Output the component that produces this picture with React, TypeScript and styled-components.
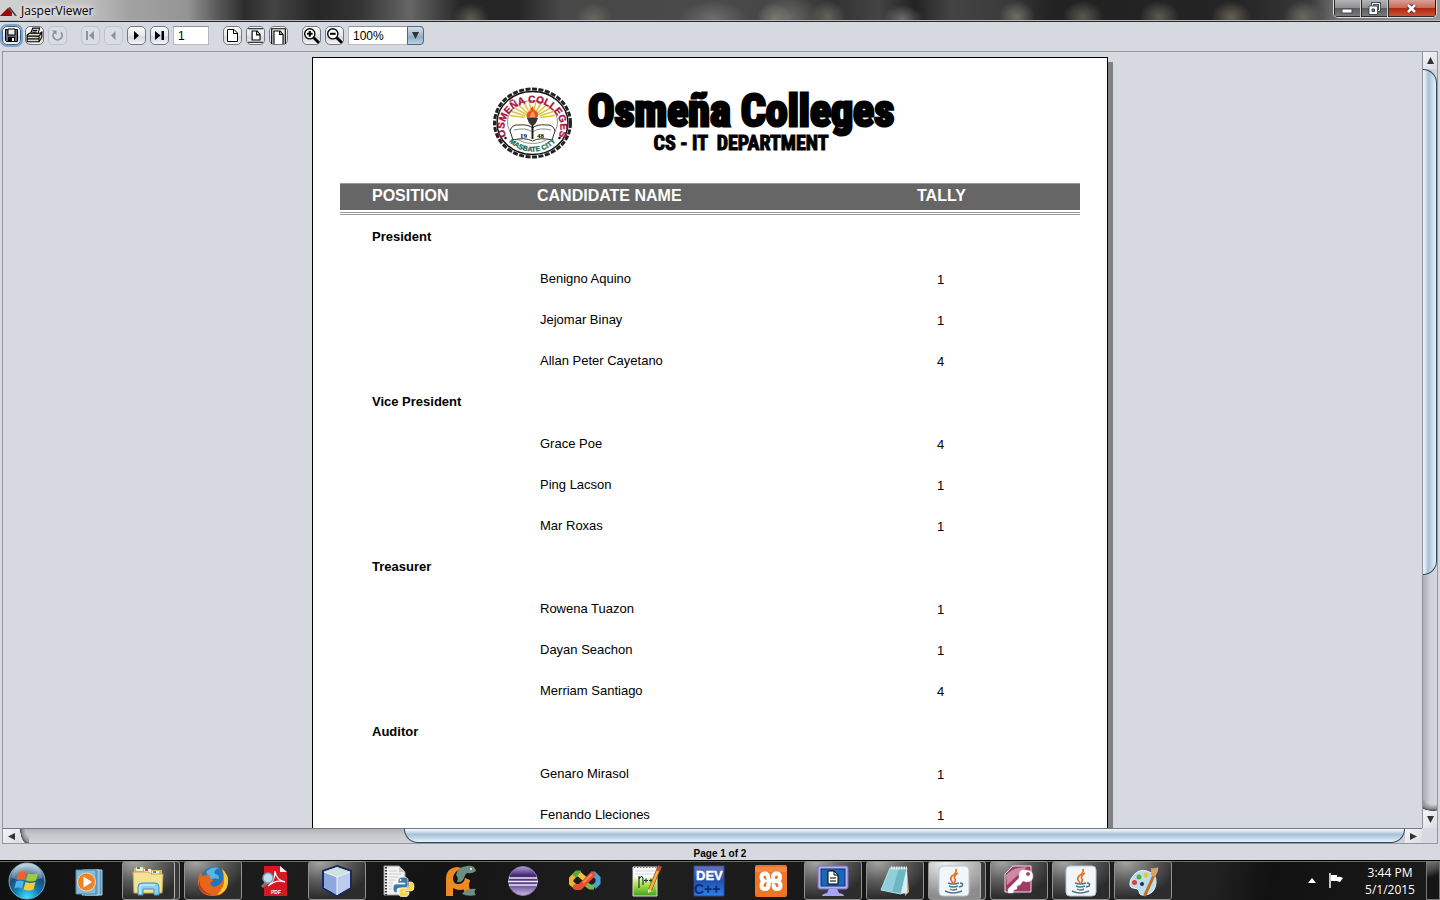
import React from "react";
import styled, { createGlobalStyle, css } from "styled-components";

const GlobalStyle = createGlobalStyle`
  * { box-sizing: border-box; }
  html, body, #root { height: 100%; }
  body {
    margin: 0;
    overflow: hidden;
    background: #d6d9e0;
    color: #000;
    font-family: "Liberation Sans", Arial, sans-serif;
  }
  button, input, select { font: inherit; color: inherit; margin: 0; padding: 0; }
  svg { display: block; }
`;

/* ---------- window frame ---------- */

const Desktop = styled.div`
  display: flex;
  flex-direction: column;
  height: 100vh;
`;

const TitleBar = styled.header`
  display: flex;
  align-items: flex-start;
  flex: none;
  height: 22px;
  border-bottom: 1px solid #26262c;
  box-shadow: inset 0 -1px #b9b9bd;
  background:
    radial-gradient(ellipse 18px 16px at 32.7% 90%, #77776baa, transparent),
    radial-gradient(ellipse 18px 16px at 41.2% 90%, #77776baa, transparent),
    radial-gradient(ellipse 18px 16px at 53.8% 90%, #8a8a7caa, transparent),
    radial-gradient(ellipse 20px 14px at 62.7% 90%, #8a8a8aaa, transparent),
    radial-gradient(ellipse 34px 18px at 49.5% 90%, #8c8c8c88, transparent),
    radial-gradient(ellipse 32px 22px at 54.8% 80%, #85858088, transparent),
    radial-gradient(ellipse 18px 16px at 57.5% 80%, #8d8d8088, transparent),
    radial-gradient(ellipse 18px 16px at 70.6% 80%, #8d8d80aa, transparent),
    radial-gradient(ellipse 20px 16px at 75.2% 80%, #77776baa, transparent),
    radial-gradient(ellipse 20px 16px at 80.5% 80%, #77776baa, transparent),
    radial-gradient(ellipse 20px 16px at 85.5% 80%, #85806caa, transparent),
    radial-gradient(ellipse 20px 16px at 90.5% 80%, #85857baa, transparent),
    linear-gradient(90deg, #d2d2d2 0, #c0c0c0 6%, #a2a2a2 9%, #949494 13%, #5c5c5c 15%, #2c2c2c 17%, #444 19%, #262626 22%, #343434 25%, #666 28.5%, #262626 32%, #262626 36%, #484848 39%, #4a4a4a 50%, #444 55%, #333 58%, #444 61%, #222 63.5%, #444 66%, #3a3a3a 70%, #222 73%, #242424 86%, #3a3a3a 91%, #777 93%, #999 100%);
`;

const WindowTitle = styled.h1`
  display: flex;
  align-items: center;
  gap: 4px;
  flex: 1;
  margin: 0;
  height: 21px;
  font: 400 12px/20px "Open Sans", "Noto Sans", sans-serif;
  text-shadow: 0 0 6px #fff, 0 0 8px #fff;
`;

const WindowButtons = styled.div`
  display: flex;
  height: 18px;
  margin-right: 3px;
  border: 1px solid #dadada;
  border-top: 0;
  border-radius: 0 0 5px 5px;
  overflow: hidden;
`;

const WindowButton = styled.button<{ $close?: boolean }>`
  display: grid;
  place-items: center;
  width: ${(p) => (p.$close ? 48 : 27)}px;
  height: 17px;
  border: 0;
  border-right: 1px solid ${(p) => (p.$close ? "#3b1410" : "#d0d0d0")};
  box-shadow: inset 1px -1px #2b2b2b;
  background: ${(p) =>
    p.$close
      ? "linear-gradient(#d9a197, #c96a58 45%, #b02a10 50%, #d0573a)"
      : "linear-gradient(#b5b5b5, #8f8f8f 45%, #5d5d5d 50%, #7e7e7e)"};
`;

/* ---------- toolbar ---------- */

const Toolbar = styled.div`
  display: flex;
  align-items: center;
  gap: 14px;
  flex: none;
  height: 29px;
  padding: 0 2px 2px;
`;

const ToolGroup = styled.div`
  display: flex;
  gap: 4px;
`;

const ToolButton = styled.button<{ $focused?: boolean }>`
  display: grid;
  place-items: center;
  width: 19px;
  height: 19px;
  border: 1px solid #6f7886;
  border-radius: 5px;
  background: linear-gradient(#fbfbfc, #e6e8ec 50%, #d3d7de 60%, #f4f5f7);
  ${(p) =>
    p.$focused &&
    css`
      border-color: #41607f;
      box-shadow: 0 0 0 2px #7ea4cc;
    `}
  &:disabled {
    border-color: #bfc3cb;
    background: #dadde3;
    color: #8e9299;
  }
`;

const PageInput = styled.input`
  width: 36px;
  height: 19px;
  padding: 1px 4px 0;
  border: 1px solid #b4b8bf;
  border-top-color: #8d9199;
  background: #fff;
  font-size: 12px;
`;

const ZoomPicker = styled.div`
  display: flex;
  position: relative;
  width: 76px;
  height: 19px;
`;

const ZoomSelect = styled.select`
  appearance: none;
  width: 100%;
  height: 19px;
  padding: 0 4px;
  border: 1px solid #b4b8bf;
  border-top-color: #8d9199;
  border-radius: 0 4px 4px 0;
  background: #fff;
  font-size: 12px;
`;

const ZoomArrow = styled.span`
  position: absolute;
  top: 0;
  right: 0;
  display: grid;
  place-items: center;
  width: 17px;
  height: 19px;
  border: 1px solid #53687f;
  border-radius: 0 4px 4px 0;
  background: linear-gradient(#d5e0ea, #9db8cf 50%, #8fadc6 60%, #bdd3e3);
  pointer-events: none;
`;

/* ---------- viewer ---------- */

const ScrollPane = styled.main`
  display: grid;
  grid-template: minmax(0, 1fr) 15px / minmax(0, 1fr) 15px;
  flex: 1;
  min-height: 0;
  margin: 0 2px;
  border: 1px solid #9297a1;
`;

const Viewport = styled.div`
  display: flex;
  justify-content: center;
  overflow: hidden;
  padding: 5px 5px 0 0;
`;

const Paper = styled.article`
  flex: none;
  align-self: flex-start;
  width: 796px;
  height: 1124px;
  padding: 29px 27px;
  border: 1px solid #000;
  background: #fff;
  box-shadow: 5px 5px #808080;
`;

const Letterhead = styled.div`
  display: flex;
  gap: 15px;
  height: 96px;
  padding-left: 152px;
`;

const HeadText = styled.div`
  display: flex;
  flex-direction: column;
  align-items: center;
  font-family: "Liberation Sans Narrow", "Roboto Condensed", Roboto, sans-serif;
  font-weight: 700;
  white-space: pre;
`;

const College = styled.h2`
  margin: 0;
  font-size: 44px;
  line-height: 48px;
  -webkit-text-stroke: 3px #000;
`;

const Department = styled.p`
  margin: 0;
  font-size: 20px;
  line-height: 16px;
  -webkit-text-stroke: 1px #000;
`;

const Report = styled.table`
  width: 100%;
  table-layout: fixed;
  border-collapse: collapse;
  font-size: 13px;
  line-height: 16px;
  text-align: left;

  td, th { padding: 0; vertical-align: top; }
`;

const HeadRow = styled.tr`
  height: 32px;
  background: linear-gradient(#999 0 1px, #666 1px 27px, #fff 27px 29px, #999 29px 30px, #fff 30px 31px, #999 31px 32px);
  color: #fff;
  font-size: 16px;

  && th { padding-top: 5px; }
  th:first-child { padding-left: 32px; }
`;

const PositionRow = styled.tr`
  height: 42px;
  && th { padding: 14px 0 0 32px; }
`;

const CandidateRow = styled.tr`
  height: 41px;
  && td { padding: 14px 0 0 3px; }
  && td:last-child { padding: 15px 0 0 20px; }
`;

/* ---------- scroll bars ---------- */

const ScrollBar = styled.div<{ $vertical?: boolean }>`
  display: flex;
  flex-direction: ${(p) => (p.$vertical ? "column" : "row")};
  min-width: 0;
  min-height: 0;
  ${(p) =>
    p.$vertical
      ? "border-left: 1px solid #8f939b; background: linear-gradient(90deg, #a9acb2, #cfd1d6 50%, #d6d7dc);"
      : "border-top: 1px solid #74787f; background: linear-gradient(#b1b4ba, #c9cbd0 50%, #d2d4d9);"}
`;

const ScrollArrow = styled.button`
  display: grid;
  place-items: center;
  flex: none;
  width: 14px;
  height: 17px;
  border: 0;
  background: linear-gradient(135deg, #f4f5f7, #d9dce2);
`;

const HorizontalArrow = styled(ScrollArrow)`
  width: 17px;
  height: 14px;
`;

const Gap = styled.div<{ $share: number }>`
  flex: ${(p) => p.$share} 1 0;
`;

const TrackEnd = styled.div<{ $vertical?: boolean }>`
  flex: none;
  width: ${(p) => (p.$vertical ? "100%" : "9px")};
  height: ${(p) => (p.$vertical ? "11px" : "100%")};
  background: ${(p) =>
    p.$vertical
      ? "radial-gradient(ellipse 17px 11px at 70% 0, transparent 40%, #85888e 80%, #505257 96%, #e4e6ea 100%)"
      : "radial-gradient(ellipse 9px 16px at 100% 0, transparent 40%, #85888e 80%, #505257 96%, #e4e6ea 100%)"};
`;

const Thumb = styled.div<{ $share: number; $vertical?: boolean }>`
  flex: ${(p) => p.$share} 1 0;
  border: 1px solid #33475c;
  ${(p) =>
    p.$vertical
      ? "border-left: 0; border-radius: 0 14px 14px 0; background: linear-gradient(90deg, #f4f8fb, #d5e2ed 20%, #a7c0d6 40%, #b9d0e2 60%, #e3f4fc);"
      : "border-top: 0; border-radius: 0 0 14px 14px; background: linear-gradient(#f4f8fb, #d5e2ed 20%, #a7c0d6 40%, #b9d0e2 60%, #e3f4fc);"}
`;

const StatusBar = styled.footer`
  flex: none;
  height: 16px;
  padding-top: 2px;
  font-size: 10px;
  line-height: 16px;
  font-weight: 700;
  text-align: center;
`;

/* ---------- taskbar ---------- */

const Taskbar = styled.nav`
  display: flex;
  flex: none;
  height: 40px;
  border-top: 1px solid #000;
  box-shadow: inset 0 1px #6c6c6c;
  background: linear-gradient(100deg, #101010, #1d1d1d 20%, #141414 30%, #202020 45%, #151515 60%, #222 84%, #111 88%, #1b1b1b);
`;

const StartButton = styled.button`
  display: grid;
  place-items: center;
  width: 60px;
  padding-right: 6px;
  border: 0;
  background: none;
`;

const Tasks = styled.div`
  display: flex;
  gap: 4px;
  flex: 1;
`;

const Task = styled.button<{ $state?: "open" | "active"; $stacked?: boolean }>`
  display: grid;
  place-items: center;
  width: 58px;
  height: 39px;
  padding: 0 ${(p) => (p.$stacked ? 6 : 0)}px 0 0;
  border: 1px solid transparent;
  border-radius: 3px;
  background: none;
  ${(p) =>
    p.$state &&
    css`
      border-color: #929292;
      background: ${p.$state === "active"
        ? "radial-gradient(ellipse 50px 34px at 30% 0, #f0f0f0, #b4b4b4 60%, #8d8d8d)"
        : "radial-gradient(ellipse 52px 36px at 20% 0, #a5a5a5, #5f5f5f 50%, #2c2c2c)"};
    `}
  ${(p) =>
    p.$stacked &&
    css`
      box-shadow: inset -4px 0 #3a3a3a, inset -5px 0 #b5b5b5;
    `}
`;

const Tray = styled.div`
  display: flex;
  align-items: center;
  gap: 13px;
  color: #fff;
`;

const TrayButton = styled.button`
  padding: 0;
  border: 0;
  background: none;
`;

const Clock = styled.time`
  width: 60px;
  margin-left: 3px;
  font: 400 12px/17px "Open Sans", "Noto Sans", sans-serif;
  text-align: center;
`;

const ShowDesktop = styled.button`
  width: 14px;
  height: 39px;
  margin-left: -7px;
  border: 1px solid #777;
  background: linear-gradient(160deg, #777, #444 25%, #151515 40%);
`;

/* ---------- drawings ---------- */

const JasperMark = () => (
  <svg width="17" height="12" viewBox="0 0 17 12">
    <path d="M0 11 L8 3 L12 7 V11Z" fill="#b30d0d" />
    <path d="M0 11 L8 3 L11 11Z" fill="#7c0505" opacity=".5" />
    <path d="M8 3 L10 2 L17 11 H15 L11 6Z" fill="#444" />
  </svg>
);

const SealMark = () => (
  <svg width="81" height="72" viewBox="0 0 81 72" role="img" aria-label="Osmeña Colleges seal">
    <defs>
      <path id="arcTop" d="M15 51 A28 25 0 1 1 66 51" />
      <path id="arcBottom" d="M12 47 A31 29 0 0 0 69 47" />
    </defs>
    <ellipse cx="40.5" cy="36" rx="38" ry="34" fill="#fff" stroke="#222" strokeWidth="3" strokeDasharray="5 1.500" />
    <ellipse cx="40.5" cy="36" rx="35.5" ry="31.5" fill="#fff" stroke="#111" strokeWidth="1.5" />
    <ellipse cx="40.5" cy="35" rx="25" ry="21.5" fill="#fffef2" stroke="#777" strokeWidth=".8" />
    <g stroke="#ddc64a" strokeWidth="1.5">
      {[-168, -154, -140, -126, -112, -98, -82, -68, -54, -40, -26, -12].map((a) => {
        const r = (a * Math.PI) / 180;
        return (
          <line key={a} x1={40.5 + 8 * Math.cos(r)} y1={32 + 7 * Math.sin(r)} x2={40.5 + 23 * Math.cos(r)} y2={32 + 17 * Math.sin(r)} />
        );
      })}
    </g>
    <path d="M18 44 Q20 37 27 38 Q36 37 40.5 41 Q45 37 54 38 Q61 37 63 44 L60 53 Q48 50 40.5 54 Q33 50 21 53Z" fill="#fff" stroke="#333" />
    <path d="M22 43 Q34 40 40.5 45 Q47 40 59 43" fill="none" stroke="#888" />
    <path d="M40.5 37 V52" stroke="#222" strokeWidth="2" />
    <path d="M35 31 H46 L44 36 L42 38 H39 L37 36Z" fill="#333" />
    <path d="M35 31 Q33 26 38 24 Q38 21 41 19 Q41 23 44 24 Q48 27 45 31Z" fill="#e8502a" />
    <path d="M38 30 Q38 27 41 24 Q43 27 43 30Z" fill="#f7a44b" />
    <text x="28" y="51" fontFamily="Liberation Serif, serif" fontSize="7" fontWeight="700">19</text>
    <text x="45" y="51" fontFamily="Liberation Serif, serif" fontSize="7" fontWeight="700">48</text>
    <text fontFamily="Liberation Sans, sans-serif" fontSize="10" fontWeight="700" fill="#a8123f" stroke="#a8123f" strokeWidth=".3">
      <textPath href="#arcTop" startOffset="50%" textAnchor="middle">OSMEÑA COLLEGES</textPath>
    </text>
    <text fontFamily="Liberation Sans, sans-serif" fontSize="7" fontWeight="700" fill="#126647" stroke="#126647" strokeWidth=".2">
      <textPath href="#arcBottom" startOffset="50%" textAnchor="middle">MASBATE CITY</textPath>
    </text>
    <circle cx="13.5" cy="51" r="1.2" />
    <circle cx="67.5" cy="51" r="1.2" />
  </svg>
);

const Glyph = ({ children, size = 15 }: { children: React.ReactNode; size?: number }) => (
  <svg width={size} height={size} viewBox="0 0 15 15" fill="none" stroke="currentColor">
    {children}
  </svg>
);

const Arrow = ({ turn = 0 }: { turn?: number }) => (
  <svg width="9" height="9" viewBox="0 0 9 9">
    <path d="M4.5 1 L8 8 H1Z" fill="#333" transform={`rotate(${turn} 4.5 4.5)`} />
  </svg>
);

const Icon = ({ children }: { children: React.ReactNode }) => (
  <svg width="32" height="32" viewBox="0 0 32 32">
    {children}
  </svg>
);

const StartOrb = () => (
  <svg width="38" height="38" viewBox="0 0 38 38">
    <defs>
      <radialGradient id="orb" cx=".5" cy=".95" r=".9">
        <stop offset="0" stopColor="#3fe0ff" />
        <stop offset=".4" stopColor="#1277b4" />
        <stop offset=".7" stopColor="#1f4e74" />
        <stop offset="1" stopColor="#a9c4d4" />
      </radialGradient>
    </defs>
    <circle cx="19" cy="19" r="18" fill="url(#orb)" stroke="#7ba6bf" />
    <path d="M4 16 A15 15 0 0 1 34 16 Q19 21 4 16Z" fill="#fff" opacity=".25" />
    <path d="M10.5 11 Q14 8.5 18.5 10.5 L16.5 18 Q12.5 16 8.5 18Z" fill="#f0622a" />
    <path d="M20 11.2 Q24.5 13.5 30 11.2 L28 18.5 Q23 20.5 18 18.5Z" fill="#9ccb3b" />
    <path d="M8 19.5 Q12 17.5 16 19.5 L14 26.5 Q10 24.5 6.5 26.5Z" fill="#4db4ec" />
    <path d="M17.5 20 Q22.5 22 27.5 20 L25.5 27.5 Q21 29.5 15.5 27.5Z" fill="#fccb3a" />
  </svg>
);

const MediaIcon = () => (
  <Icon>
    <path d="M12 5 H29 V30 H12Z" fill="#5a9ac4" stroke="#a9d4ee" />
    <path d="M9 5 H26 V30 H9Z" fill="#6eabd0" stroke="#b7dcf2" />
    <path d="M3 5 H23 V29 H3Z" fill="#86bbdc" stroke="#4f86ac" />
    <circle cx="13.5" cy="17" r="9" fill="#f08125" stroke="#fbd0a4" />
    <path d="M10.5 11.5 L19 17 L10.5 22.5Z" fill="#fff" />
  </Icon>
);

const ExplorerIcon = () => (
  <Icon>
    <path d="M2 3 H12 L14 5 H30 V28 H2Z" fill="#d9b75e" />
    <path d="M4 2 H11 V6 H4Z" fill="#f4f4f4" stroke="#bb9" strokeWidth=".5" />
    <path d="M5 2 H8 V4 H5Z" fill="#29a329" />
    <path d="M12 4 H19 V8 H12Z" fill="#f9f9f9" />
    <path d="M13 4 H16 V6 H13Z" fill="#d6492a" />
    <path d="M20 6 H27 V10 H20Z" fill="#f9f9f9" />
    <path d="M21 6 H24 V8 H21Z" fill="#3a91d8" />
    <path d="M1 7 H17 L19 9 H31 L30 28 H2Z" fill="#f5e295" stroke="#c9a650" />
    <path d="M6 30 V22 Q6 18 10 18 H23 Q27 18 27 22 V30 H22 V24 H11 V30Z" fill="#8ed0ec" stroke="#3f93bd" />
    <path d="M8 29 V22 Q8 20 10 20 H23" stroke="#dff6ff" fill="none" />
  </Icon>
);

const FirefoxIcon = () => (
  <Icon>
    <circle cx="17" cy="15" r="13" fill="#1f76b9" />
    <path d="M9 7 Q14 1 22 3 Q16 5 18 9 Q22 9 22 14 Q17 12 14 15Z" fill="#58b5e8" />
    <path d="M5 6 Q4 10 6 11 Q9 9 13 10 Q11 13 14 14 Q17 14 16 16 Q13 17 13 19 Q16 23 20 21 Q25 19 26 14 Q27 9 25 4 Q32 10 31 18 Q29 31 16 31 Q2 31 1 17 Q1 10 5 6Z" fill="#e8661c" />
    <path d="M25 4 Q32 10 31 18 Q29 28 20 30 Q28 22 27 14 Q27 8 25 4Z" fill="#fbc92f" />
    <path d="M2 14 Q3 27 16 30 Q6 30 2 22Z" fill="#b9361b" />
  </Icon>
);

const PdfIcon = () => (
  <Icon>
    <path d="M5 1 H21 L28 7 V31 H5Z" fill="#d31a22" />
    <path d="M21 1 V7 H28Z" fill="#f4f4f4" />
    <path d="M9 21 Q16 16 16 6 Q17 15 26 17 Q17 14 9 21Z" fill="none" stroke="#fff" strokeWidth="1.3" />
    <path d="M8 17 L3 22" stroke="#777" strokeWidth="3" />
    <circle cx="9" cy="13" r="5" fill="#bfe0f4" stroke="#8a9cab" strokeWidth="1.5" />
    <text x="12" y="29" fontSize="5" fontWeight="700" fill="#fff" fontFamily="Liberation Sans, sans-serif">PDF</text>
  </Icon>
);

const CubeIcon = () => (
  <Icon>
    <path d="M16 1 L30 6 V23 L16 31 L2 23 V6Z" fill="#cfdcf0" stroke="#1b2762" strokeWidth="2" />
    <path d="M3 7 L16 12 V30 L3 22Z" fill="#8ea7dd" />
    <path d="M16 12 L29 7 V22 L16 30Z" fill="#bccbee" />
    <path d="M3 6.5 L16 2 L29 6.5 L16 12Z" fill="#cfe3dc" />
    <path d="M16 12 V30 M3 7 L16 12 L29 7" stroke="#eef4fd" fill="none" />
  </Icon>
);

const Snake = () => (
  <>
    <path d="M20 12 Q15 12 15 16 V18 H22 V19 H13 Q10 19 10 24 Q10 28 14 28 V25 Q14 23 17 23 H22 Q25 23 25 20 V15 Q25 12 20 12Z" fill="#3c78a9" stroke="#fff" strokeWidth=".7" />
    <path d="M26 17 H28 Q31 17 31 22 Q31 26 28 26 H21 V27 H26 V29 Q25 32 21 32 Q16 32 16 29 V26 Q16 23 19 23 H24 Q26 23 26 20Z" fill="#fad749" stroke="#fff" strokeWidth=".7" />
    <circle cx="17.5" cy="15" r="1" fill="#fff" />
  </>
);

const PythonIcon = () => (
  <Icon>
    <path d="M1 1 H16 L22 7 V30 H1Z" fill="#f2f2f2" stroke="#999" />
    <path d="M3 2 V30" stroke="#333" strokeWidth="2" strokeDasharray="1.500 1.500" />
    <path d="M16 1 V7 H22Z" fill="#c7c7c7" />
    <path d="M6 6 H14 M6 9 H18 M6 12 H15 M6 15 H12 M6 18 H10 M6 21 H9 M6 24 H9" stroke="#ccc" />
    <Snake />
  </Icon>
);

const CharmIcon = () => (
  <Icon>
    <path d="M1 31 V14 Q1 3 12 2 L17 3 Q9 6 8 13 Q8 19 13 19 Q19 19 20 13 L25 15 Q23 25 15 25 Q11 25 8 23 V31Z" fill="#ee8a23" />
    <path d="M11 10 Q12 2 22 1 Q30 0 31 6 Q27 9 22 8 Q20 9 19 13 Q17 18 12 17 Q14 13 11 10Z" fill="#6d8f81" />
    <circle cx="26" cy="4" r="1" fill="#fff" />
    <path d="M19 17 L25 15 Q22 24 27 26 L21 28 Q17 26 19 17Z" fill="#ee8a23" />
    <path d="M17 29 Q21 23 31 24 Q28 27 31 30 Q23 32 17 29Z" fill="#6d8f81" />
  </Icon>
);

const EclipseIcon = () => (
  <Icon>
    <defs>
      <linearGradient id="ecl" x2="0" y2="1">
        <stop offset="0" stopColor="#b9a4d6" />
        <stop offset=".3" stopColor="#432a72" />
        <stop offset=".6" stopColor="#5b4389" />
        <stop offset="1" stopColor="#cdbce6" />
      </linearGradient>
    </defs>
    <circle cx="16" cy="16" r="14.5" fill="url(#ecl)" stroke="#8774ab" />
    <path d="M2 13 H30 M1 16.5 H31 M2 20 H30" stroke="#eee6fa" strokeWidth="1.5" />
  </Icon>
);

const RibbonIcon = () => (
  <Icon>
    <path d="M10 9 H7 L2 14 V18 L7 22" fill="none" stroke="#e9b730" strokeWidth="5" />
    <path d="M5 11 L8 8 H12" fill="none" stroke="#5aa646" strokeWidth="5" />
    <path d="M22 9 H25 L29 13 V18 L25 22" fill="none" stroke="#4d9fd3" strokeWidth="5" />
    <path d="M25 22 H21 L17 19" fill="none" stroke="#71b94e" strokeWidth="5" />
    <path d="M10 9 L17 15" stroke="#f0c443" strokeWidth="5" />
    <path d="M7 22 H11 L23 10" fill="none" stroke="#e84f2c" strokeWidth="6" strokeLinecap="round" strokeLinejoin="round" />
    <path d="M14 18 L23 9" stroke="#f58a58" strokeWidth="2" />
  </Icon>
);

const NotepadPlusIcon = () => (
  <Icon>
    <defs>
      <linearGradient id="npp" x2="0" y2="1">
        <stop offset=".3" stopColor="#fff" />
        <stop offset=".6" stopColor="#b2e34c" />
        <stop offset="1" stopColor="#3fa31d" />
      </linearGradient>
    </defs>
    <path d="M2 2 H26 V31 H2Z" fill="url(#npp)" stroke="#ddd" />
    <path d="M3 2 H26" stroke="#888" strokeWidth="2" strokeDasharray="1.500 1.500" />
    <path d="M4 6 H24 M4 9 H24" stroke="#c9d4dc" />
    <path d="M8 23 V11 M8 14 Q11 9 12 14 V20 M13 15.5 H17 M15 13.5 V17.5 M18 15.5 H22 M20 13.5 V17.5" fill="none" stroke="#234" strokeWidth="1.2" />
    <path d="M28 3 L19 25" stroke="#8c5a1f" strokeWidth="4" />
    <path d="M28 3 L19 25" stroke="#f3b63c" strokeWidth="2.5" />
    <path d="M29 1 L27 6" stroke="#c4473a" strokeWidth="4" />
    <path d="M17 24 L21 26 L17 28Z" fill="#f2dfb4" />
  </Icon>
);

const DevIcon = () => (
  <Icon>
    <defs>
      <linearGradient id="dev" x2="0" y2="1">
        <stop offset="0" stopColor="#6d72b4" />
        <stop offset=".5" stopColor="#2251b0" />
        <stop offset="1" stopColor="#2d7ff0" />
      </linearGradient>
    </defs>
    <path d="M1 1 H31 V31 H1Z" fill="url(#dev)" stroke="#274b9c" />
    <text x="3" y="15" fontSize="13" fontWeight="700" fill="#fff" stroke="#fff" strokeWidth=".4" fontFamily="Liberation Sans, sans-serif">DEV</text>
    <text x="1" y="29" fontSize="14" fontWeight="700" fill="#0f2d6e" fontFamily="Liberation Sans Narrow, sans-serif">C++</text>
  </Icon>
);

const XamppIcon = () => (
  <Icon>
    <rect x="0" y="0" width="32" height="32" rx="2" fill="#ee7426" />
    <path d="M0 2 H32 V7 H0Z" fill="#fff" opacity=".15" />
    <g fill="none" stroke="#fff" strokeWidth="4" strokeLinecap="round">
      <path d="M13 12 Q13 8.5 10 8.5 Q6.5 8.5 6.5 12 Q6.5 15 9 16 Q6.5 17.500 6.5 20.5 Q6.5 24 10 24 Q13.5 24 13.5 20 V19" />
      <path d="M18 12 Q18 8.5 21.5 8.5 Q25 8.5 25 12 Q25 15 22.5 16 Q25.500 17.500 25.5 20.5 Q25.5 24 22 24 Q18.5 24 18.500 20" />
      <path d="M13 12 L14 16 H22 M14 16 L13.5 20 M14 16 H18 L18 12" />
    </g>
  </Icon>
);

const MonitorIcon = () => (
  <Icon>
    <rect x="1" y="1" width="30" height="23" rx="2" fill="#b4b0f2" stroke="#706cc9" />
    <rect x="4" y="4" width="24" height="17" fill="#1867b9" stroke="#12336b" />
    <path d="M12 24 H20 L22 28 Q27 29 27 31 H5 Q5 29 10 28Z" fill="#a9a2f5" />
    <path d="M11 6 H17 L21 10 V19 H11Z" fill="#fff" stroke="#000" />
    <path d="M17 6 V10 H21 M13 13 H19 M13 16 H19" stroke="#000" fill="none" />
  </Icon>
);

const NoteIcon = () => (
  <Icon>
    <path d="M28 4 L30 27 L26 31 L24 8Z" fill="#c9b478" />
    <path d="M11 3 H28 L22 29 L2 25Z" fill="#6db7c5" stroke="#b7e3ea" />
    <path d="M11 3 H20 L13 27 L2 25Z" fill="#a9dde5" opacity=".6" />
    <path d="M28 4 L28 28 L22 29Z" fill="#d9eef1" />
    <path d="M12 3 H28" stroke="#eee" strokeWidth="3" strokeDasharray="1.500 1" />
  </Icon>
);

const JavaIcon = () => (
  <Icon>
    <rect x="1" y="1" width="30" height="30" rx="4" fill="#f3f6f9" stroke="#b6c6d5" />
    <path d="M18 4 Q19 8 14 11 Q11 14 15 18 M20 8 Q15 11 17 14 Q18 16 16 18" fill="none" stroke="#e67625" strokeWidth="1.8" />
    <path d="M10 18 Q15 20 21 18 M11 21 Q15 23 20 21 M12 24 Q15 26 19 24 M22 18 Q26 18 24 21 L21 22 M7 26 Q15 30 24 26" fill="none" stroke="#4b7690" strokeWidth="1.5" />
  </Icon>
);

const AccessIcon = () => (
  <Icon>
    <path d="M10 1 H28 V27 H2 V9Z" fill="#a13a62" stroke="#f2dce4" />
    <path d="M3 10 Q10 2 24 2 L4 20Z" fill="#cb8aa2" />
    <path fillRule="evenodd" d="M16 9 Q17 4 23 5 Q30 5 30 11 Q30 17 23 17 L20 16 L17 20 L14 21 V24 L11 25 L10 28 L5 28 V24 L16 13Z M25 7 A2 2 0 1 0 25.1 7Z" fill="#fff" stroke="#d9c4cc" strokeWidth=".5" />
  </Icon>
);

const PaintIcon = () => (
  <Icon>
    <path d="M4 14 Q10 3 20 6 Q30 9 29 18 Q28 29 18 30 Q12 31 12 26 Q11 23 6 23 Q1 22 4 14Z" fill="#b9dcee" stroke="#e8f6fc" />
    <circle cx="7.5" cy="17.5" r="2.5" fill="#dd3f32" />
    <circle cx="12" cy="12" r="2.5" fill="#55ab41" />
    <circle cx="19" cy="10" r="2.5" fill="#f2c52e" />
    <circle cx="15" cy="19" r="2" fill="#25353f" />
    <path d="M28 8 L18 30" stroke="#c66d1f" strokeWidth="3" strokeLinecap="round" />
    <path d="M24 3 Q28 4 31 2 L31 6 L28 12 L24 10Z" fill="#d4a46a" />
  </Icon>
);

/* ---------- data ---------- */

const positions = [
  { title: "President", candidates: [["Benigno Aquino", 1], ["Jejomar Binay", 1], ["Allan Peter Cayetano", 4]] },
  { title: "Vice President", candidates: [["Grace Poe", 4], ["Ping Lacson", 1], ["Mar Roxas", 1]] },
  { title: "Treasurer", candidates: [["Rowena Tuazon", 1], ["Dayan Seachon", 1], ["Merriam Santiago", 4]] },
  { title: "Auditor", candidates: [["Genaro Mirasol", 1], ["Fenando Lleciones", 1]] },
] as const;

type TaskInfo = { name: string; icon: () => React.JSX.Element; state?: "open" | "active"; stacked?: boolean };

const tasks: TaskInfo[] = [
  { name: "Media Player", icon: MediaIcon },
  { name: "Explorer", icon: ExplorerIcon, state: "open", stacked: true },
  { name: "Firefox", icon: FirefoxIcon, state: "open" },
  { name: "PDF Reader", icon: PdfIcon },
  { name: "NetBeans", icon: CubeIcon, state: "open" },
  { name: "Python", icon: PythonIcon },
  { name: "PyCharm", icon: CharmIcon },
  { name: "Eclipse", icon: EclipseIcon },
  { name: "Code Studio", icon: RibbonIcon },
  { name: "Notepad++", icon: NotepadPlusIcon },
  { name: "Dev-C++", icon: DevIcon },
  { name: "XAMPP", icon: XamppIcon },
  { name: "Screen Tool", icon: MonitorIcon, state: "open" },
  { name: "Notepad", icon: NoteIcon, state: "open" },
  { name: "Java", icon: JavaIcon, state: "active", stacked: true },
  { name: "Access", icon: AccessIcon, state: "open" },
  { name: "Java Application", icon: JavaIcon, state: "open" },
  { name: "Paint", icon: PaintIcon, state: "open" },
];

/* ---------- page ---------- */

const ViewerToolbar = () => (
  <Toolbar>
    <ToolGroup>
      <ToolButton $focused aria-label="Save">
        <Glyph>
          <path d="M1.5 1.5 H13.5 V13.5 H2.5 L1.5 12.5Z" fill="#667" stroke="#000" />
          <path d="M4 1 H11 V7 H4Z" fill="#e8eaf0" stroke="#000" />
          <path d="M4 9 H11 V14 H4Z" fill="#000" stroke="none" />
          <path d="M8 10 H10 V13 H8Z" fill="#fff" stroke="none" />
        </Glyph>
      </ToolButton>
      <ToolButton aria-label="Print">
        <Glyph size={17}>
          <path d="M4 6 L6 1 H12 L10.5 6Z" fill="#fff" />
          <path d="M6 3 H10 M5.5 4.5 H9.5" />
          <path d="M1 7 L3 5.5 H12.5 L14 4.5 V9 L11.5 13 H1Z" fill="#dcdcd0" />
          <path d="M1 8 H11.5 V13 M1 10.5 H11.5 M11.5 8 L14 5" />
          <path d="M8 9.5 H10" stroke="#c8b400" />
        </Glyph>
      </ToolButton>
      <ToolButton disabled aria-label="Reload">
        <Glyph>
          <path d="M4.2 4.5 A4.5 4.5 0 1 0 11 4.5" strokeWidth="1.8" />
          <path d="M2 2.5 H6.5 V7Z" fill="currentColor" stroke="none" />
        </Glyph>
      </ToolButton>
    </ToolGroup>
    <ToolGroup>
      <ToolButton disabled aria-label="First page">
        <Glyph>
          <path d="M3 3 H5 V12 H3Z M11 3 V12 L6 7.5Z" fill="currentColor" stroke="none" />
        </Glyph>
      </ToolButton>
      <ToolButton disabled aria-label="Previous page">
        <Glyph>
          <path d="M9.5 3 V12 L5 7.5Z" fill="currentColor" stroke="none" />
        </Glyph>
      </ToolButton>
      <ToolButton aria-label="Next page">
        <Glyph>
          <path d="M5 3 V12 L10 7.5Z" fill="currentColor" stroke="none" />
        </Glyph>
      </ToolButton>
      <ToolButton aria-label="Last page">
        <Glyph>
          <path d="M3 3 V12 L8.5 7.5Z M9.5 3 H12 V12 H9.5Z" fill="currentColor" stroke="none" />
        </Glyph>
      </ToolButton>
      <PageInput aria-label="Page number" defaultValue="1" />
    </ToolGroup>
    <ToolGroup>
      <ToolButton aria-label="Actual size">
        <Glyph>
          <path d="M2.5 1.5 H9 L12.5 5 V13.5 H2.5Z" fill="#fff" />
          <path d="M8.5 1.5 V5.5 H12.5" />
        </Glyph>
      </ToolButton>
      <ToolButton aria-label="Fit page">
        <Glyph size={17}>
          <path d="M1 1.5 H14 M1 13.5 H14" />
          <path d="M4.5 3.5 H9 L11.5 6.5 V11.5 H4.5Z" fill="#fff" />
          <path d="M8.5 3.5 V7 H11.5" />
        </Glyph>
      </ToolButton>
      <ToolButton aria-label="Fit width">
        <Glyph size={17}>
          <path d="M1.5 1 V15 M13.5 1 V15 M1 1.5 H14" />
          <path d="M3.5 15 V3.5 H9 L11.5 6.5 V15" fill="#fff" />
          <path d="M8.5 3.5 V6.5 H11.5" />
        </Glyph>
      </ToolButton>
    </ToolGroup>
    <ToolGroup>
      <ToolButton aria-label="Zoom in">
        <Glyph size={17}>
          <circle cx="6" cy="6" r="4.5" fill="#fff" strokeWidth="1.2" />
          <path d="M3.5 6 H8.5 M6 3.5 V8.5" strokeWidth="1.8" />
          <path d="M9.5 9.5 L14 14" strokeWidth="2.5" />
        </Glyph>
      </ToolButton>
      <ToolButton aria-label="Zoom out">
        <Glyph size={17}>
          <circle cx="6" cy="6" r="4.5" fill="#fff" strokeWidth="1.2" />
          <path d="M3.5 6 H8.5" strokeWidth="1.8" />
          <path d="M9.5 9.5 L14 14" strokeWidth="2.5" />
        </Glyph>
      </ToolButton>
      <ZoomPicker>
        <ZoomSelect aria-label="Zoom ratio" defaultValue="100%">
          <option>50%</option>
          <option>100%</option>
          <option>200%</option>
        </ZoomSelect>
        <ZoomArrow>
          <Arrow turn={180} />
        </ZoomArrow>
      </ZoomPicker>
    </ToolGroup>
  </Toolbar>
);

const TallyReport = () => (
  <Paper>
    <Letterhead>
      <SealMark />
      <HeadText>
        <College>Osmeña Colleges</College>
        <Department>{"CS - IT  DEPARTMENT"}</Department>
      </HeadText>
    </Letterhead>
    <Report>
      <colgroup>
        <col width="197" />
        <col width="380" />
        <col />
      </colgroup>
      <thead>
        <HeadRow>
          <th>POSITION</th>
          <th>CANDIDATE NAME</th>
          <th>TALLY</th>
        </HeadRow>
      </thead>
      {positions.map((position) => (
        <tbody key={position.title}>
          <PositionRow>
            <th colSpan={3}>{position.title}</th>
          </PositionRow>
          {position.candidates.map(([name, tally]) => (
            <CandidateRow key={name}>
              <td />
              <td>{name}</td>
              <td>{tally}</td>
            </CandidateRow>
          ))}
        </tbody>
      ))}
    </Report>
  </Paper>
);

export default function App() {
  return (
    <Desktop>
      <GlobalStyle />
      <TitleBar>
        <WindowTitle>
          <JasperMark />
          JasperViewer
        </WindowTitle>
        <WindowButtons>
          <WindowButton aria-label="Minimize">
            <svg width="12" height="12" viewBox="0 0 12 12">
              <rect x="1" y="6" width="10" height="4" fill="#fff" stroke="#444b5a" />
            </svg>
          </WindowButton>
          <WindowButton aria-label="Restore">
            <svg width="13" height="13" viewBox="0 0 13 13">
              <path d="M4.5 1.500 H11.5 V8.500 H4.5Z" fill="none" stroke="#444b5a" strokeWidth="3" />
              <path d="M4.5 1.500 H11.5 V8.500 H4.5Z" fill="none" stroke="#fff" />
              <path d="M1 4 H9.500 V12.500 H1Z" fill="#fff" stroke="#444b5a" />
              <path d="M4 7 H6.500 V9.500 H4Z" fill="#777" stroke="#444b5a" />
            </svg>
          </WindowButton>
          <WindowButton $close aria-label="Close">
            <svg width="13" height="11" viewBox="0 0 13 11">
              <path d="M3 2 L10 9 M10 2 L3 9" stroke="#5a3038" strokeWidth="4.5" />
              <path d="M3 2 L10 9 M10 2 L3 9" stroke="#fff" strokeWidth="2.5" />
            </svg>
          </WindowButton>
        </WindowButtons>
      </TitleBar>
      <ViewerToolbar />
      <ScrollPane>
        <Viewport>
          <TallyReport />
        </Viewport>
        <ScrollBar $vertical>
          <ScrollArrow aria-label="Scroll up">
            <Arrow />
          </ScrollArrow>
          <Thumb $vertical $share={505} />
          <Gap $share={226} />
          <TrackEnd $vertical />
          <ScrollArrow aria-label="Scroll down">
            <Arrow turn={180} />
          </ScrollArrow>
        </ScrollBar>
        <ScrollBar>
          <HorizontalArrow aria-label="Scroll left">
            <Arrow turn={-90} />
          </HorizontalArrow>
          <TrackEnd />
          <Gap $share={376} />
          <Thumb $share={1000} />
          <HorizontalArrow aria-label="Scroll right">
            <Arrow turn={90} />
          </HorizontalArrow>
        </ScrollBar>
      </ScrollPane>
      <StatusBar>Page 1 of 2</StatusBar>
      <Taskbar>
        <StartButton aria-label="Start">
          <StartOrb />
        </StartButton>
        <Tasks>
          {tasks.map(({ name, icon: TaskIcon, state, stacked }) => (
            <Task key={name} aria-label={name} $state={state} $stacked={stacked}>
              <TaskIcon />
            </Task>
          ))}
        </Tasks>
        <Tray>
          <TrayButton aria-label="Show hidden icons">
            <svg width="8" height="5" viewBox="0 0 8 5">
              <path d="M4 0 L8 5 H0Z" fill="#fff" />
            </svg>
          </TrayButton>
          <TrayButton aria-label="Action Center">
            <svg width="15" height="15" viewBox="0 0 15 15">
              <path d="M1 0 V15" stroke="#fff" strokeWidth="1.5" />
              <path d="M2 2 H8 V4 Q11 3 14 5 L11 9 L8 8 H2Z" fill="#fff" />
            </svg>
          </TrayButton>
          <Clock>
            3:44 PM
            <br />
            5/1/2015
          </Clock>
          <ShowDesktop aria-label="Show desktop" />
        </Tray>
      </Taskbar>
    </Desktop>
  );
}
